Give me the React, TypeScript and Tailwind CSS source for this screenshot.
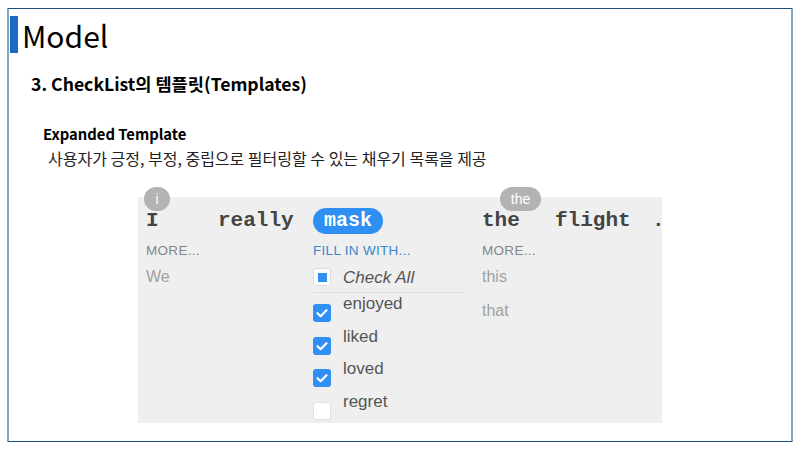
import React from 'react';

const mono = { fontFamily: '"Liberation Mono", "Courier New", monospace' };

const CheckIcon: React.FC = () => (
    <svg viewBox="0 0 18 18" className="w-[18px] h-[18px]">
        <rect x="0" y="0" width="18" height="18" rx="3" fill="#2f8ff2" />
        <path d="M4.5 9.2 L7.6 12.2 L13.5 6.2" fill="none" stroke="#fff" strokeWidth="2.2" strokeLinecap="round" strokeLinejoin="round" />
    </svg>
);

const Option: React.FC<{ label: string; checked: boolean }> = ({ label, checked }) => (
    <div className="flex items-start h-[32.5px]">
        <div className="mt-[10px] w-[18px] h-[18px]">
            {checked ? <CheckIcon /> : <div className="w-[18px] h-[18px] bg-white rounded-[3px] border border-[#e2e2e2]" />}
        </div>
        <span className="ml-[12px] text-[17px] leading-[20px] text-[#555]">{label}</span>
    </div>
);

const App: React.FC = () => {
    return (
        <div className="w-[800px] h-[450px] bg-white relative overflow-hidden" style={{ fontFamily: '"Noto Sans CJK KR", "Noto Sans", sans-serif' }}>
            <div className="absolute left-[7px] top-[8px] w-[786px] h-[434px] border-t border-t-[#1f4e79] border-b border-b-[#1f4e79] border-l-2 border-l-[#7fa7ca] border-r-2 border-r-[#7fa7ca]">
                <div className="flex items-center mt-[7px] h-[37px]">
                    <div className="w-[8px] h-[37px] bg-[#1b6ac4] ml-[1px]" />
                    <span className="ml-[4px] text-[30px] leading-none text-black">Model</span>
                </div>
                <div className="ml-[22px] mt-[20px] text-[17.6px] font-bold text-black leading-[22px]">3. CheckList의 템플릿(Templates)</div>
                <div className="ml-[34px] mt-[29px] text-[14.8px] font-bold text-black leading-[20px]">Expanded Template</div>
                <div className="ml-[39px] mt-[3px] text-[16px] text-[#222] leading-[22px]">사용자가 긍정, 부정, 중립으로 필터링할 수 있는 채우기 목록을 제공</div>

                <div className="ml-[129px] mt-[28px] w-[524px] h-[226px] bg-[#efefef] relative" style={{ fontFamily: '"Liberation Sans", Arial, sans-serif' }}>
                    <div className="flex pl-[8px] pt-[11px]">
                        <div className="w-[72px] shrink-0 relative">
                            <div className="absolute left-[-2px] top-[-21px] w-[26px] h-[24px] rounded-full bg-[#b3b3b3] text-white text-[14px] flex items-center justify-center">i</div>
                            <div className="h-[26px] flex items-center text-[21px] font-bold text-[#444]" style={mono}>I</div>
                            <div className="mt-[7px] text-[13.5px] text-[#858585] tracking-[0.3px]">MORE...</div>
                            <div className="mt-[4px] text-[16px] text-[#a0a0a0]">We</div>
                        </div>
                        <div className="w-[95px] shrink-0">
                            <div className="h-[26px] flex items-center text-[21px] font-bold text-[#444]" style={mono}>really</div>
                        </div>
                        <div className="w-[169px] shrink-0">
                            <div className="h-[26px] w-[70px] rounded-full bg-[#2f8ff2] flex items-center justify-center text-[20px] font-bold text-white" style={mono}>mask</div>
                            <div className="mt-[7px] text-[13.5px] text-[#3a86cc] tracking-[0.3px]">FILL IN WITH...</div>
                            <div className="mt-[5px] flex items-center h-[22px] w-[152px]">
                                <div className="w-[18px] h-[18px] bg-white border border-[#dcdcdc] rounded-[3px] flex items-center justify-center">
                                    <div className="w-[9px] h-[9px] bg-[#2f8ff2]" />
                                </div>
                                <span className="ml-[12px] text-[17px] italic text-[#555]">Check All</span>
                            </div>
                            <div className="w-[152px] h-px bg-[#dedede] mt-[4px]" />
                            <div className="pt-[1px]">
                                <Option label="enjoyed" checked />
                                <Option label="liked" checked />
                                <Option label="loved" checked />
                                <Option label="regret" checked={false} />
                            </div>
                        </div>
                        <div className="w-[73px] shrink-0 relative">
                            <div className="absolute left-[18px] top-[-21px] w-[41px] h-[24px] rounded-full bg-[#b3b3b3] text-white text-[14px] flex items-center justify-center">the</div>
                            <div className="h-[26px] flex items-center text-[21px] font-bold text-[#444]" style={mono}>the</div>
                            <div className="mt-[7px] text-[13.5px] text-[#858585] tracking-[0.3px]">MORE...</div>
                            <div className="mt-[4px] text-[16px] text-[#a0a0a0]">this</div>
                            <div className="mt-[10px] text-[16px] text-[#a0a0a0]">that</div>
                        </div>
                        <div className="w-[97px] shrink-0">
                            <div className="h-[26px] flex items-center text-[21px] font-bold text-[#444]" style={mono}>flight</div>
                        </div>
                        <div className="shrink-0">
                            <div className="h-[26px] flex items-center text-[21px] font-bold text-[#444]" style={mono}>.</div>
                        </div>
                    </div>
                </div>
            </div>
        </div>
    );
};

export default App;
